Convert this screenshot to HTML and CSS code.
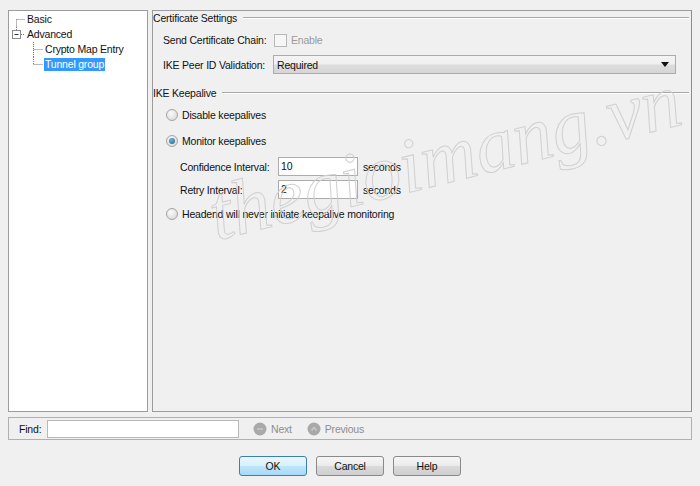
FILE: index.html
```
<!DOCTYPE html>
<html>
<head>
<title>Advanced - Tunnel group</title>
<meta http-equiv="Content-Type" content="text/html; charset=utf-8">
<link rel="stylesheet" href="styles.css">
</head>
<body>
<div class="main">
	<!-- left navigation tree -->
	<div class="tree">
		<div class="node">
			<svg class="conn" width="17" height="15"><path d="M7.5 7.5V15M7.5 7.5H16" class="dots"/></svg>
			<span class="lbl">Basic</span>
		</div>
		<div class="node">
			<svg class="conn" width="17" height="15"><path d="M7.5 0V3" class="dots"/><rect x="3.5" y="3.5" width="8" height="8" fill="#fff" stroke="#8c8c8c"/><path d="M5.5 7.5H9.5" stroke="#333"/><path d="M12 7.5H16" class="dots"/></svg>
			<span class="lbl">Advanced</span>
		</div>
		<div class="node">
			<svg class="conn" width="35" height="15"><path d="M24.5 0V15M24.5 7.5H34" class="dots"/></svg>
			<span class="lbl">Crypto Map Entry</span>
		</div>
		<div class="node">
			<svg class="conn" width="35" height="15"><path d="M24.5 0V7.5M24.5 7.5H34" class="dots"/></svg>
			<span class="lbl sel">Tunnel group</span>
		</div>
	</div>

	<!-- settings panel -->
	<div class="settings">
		<div class="sect"><span>Certificate Settings</span><i class="rule"></i></div>
		<div class="row r-chain">
			<span class="key">Send Certificate Chain:</span>
			<span class="check"></span><span class="off">Enable</span>
		</div>
		<div class="row r-peer">
			<span class="key">IKE Peer ID Validation:</span>
			<div class="combo"><span>Required</span><b class="arrow"></b></div>
		</div>

		<div class="sect s-keep"><span>IKE Keepalive</span><i class="rule"></i></div>
		<div class="row opt r-dis"><span class="radio"></span>Disable keepalives</div>
		<div class="row opt r-mon"><span class="radio on"></span>Monitor keepalives</div>
		<div class="row sub r-conf">
			<span class="key2">Confidence Interval:</span>
			<div class="field">10</div><span class="unit">seconds</span>
		</div>
		<div class="row sub r-retry">
			<span class="key2">Retry Interval:</span>
			<div class="field">2</div><span class="unit">seconds</span>
		</div>
		<div class="row opt r-head"><span class="radio"></span>Headend will never initiate keepalive monitoring</div>

		<div class="mark">thegioimang.vn</div>
	</div>
</div>

<div class="findbar">
	<span class="findlbl">Find:</span>
	<div class="findbox"></div>
	<span class="nav"><svg width="14" height="14"><circle cx="7" cy="7" r="6.5" fill="#a9a9a9"/><path d="M4 7H10" stroke="#c8c8c8" stroke-width="1.5"/></svg>Next</span>
	<span class="nav"><svg width="14" height="14"><circle cx="7" cy="7" r="6.5" fill="#a9a9a9"/><path d="M4.5 8.5L7 5.5L9.5 8.5" stroke="#c8c8c8" stroke-width="1.5" fill="none"/></svg>Previous</span>
</div>

<div class="buttons">
	<div class="btn def">OK</div>
	<div class="btn">Cancel</div>
	<div class="btn">Help</div>
</div>
</body>
</html>
```
FILE: styles.css
```
html, body {
	margin: 0;
	width: 700px;
	height: 486px;
	overflow: hidden;
	background: #f0f0f0;
	font-family: "Liberation Sans", Arial, sans-serif;
	font-size: 10.5px;
	letter-spacing: -0.2px;
	color: #111;
	white-space: nowrap;
}
.main {
	display: flex;
	gap: 4px;
	padding: 10px 8px 0 8px;
	height: 402px;
}
.tree {
	width: 138px;
	background: #fff;
	border: 1px solid #9c9c9c;
	padding-top: 1px;
}
.node {
	display: flex;
	align-items: center;
	height: 15px;
}
.conn {
	flex: none;
}
.dots {
	stroke: #777;
	stroke-dasharray: 1 1;
	fill: none;
}
.lbl {
	padding: 0 1px;
	line-height: 13px;
}
.sel {
	background: #3399ff;
	color: #fff;
}

.settings {
	flex: 1;
	position: relative;
	overflow: hidden;
	border: 1px solid #9c9c9c;
	border-right-color: #8c8c8c;
}
.sect {
	display: flex;
	align-items: center;
	height: 14px;
	padding-right: 2px;
}
.rule {
	flex: 1;
	margin-left: 6px;
	border-top: 1px solid #a8a8a8;
	border-bottom: 1px solid #fff;
}
.row {
	display: flex;
	align-items: center;
}
.r-chain {
	height: 20px;
	margin-top: 5px;
	padding-left: 10px;
}
.r-peer {
	height: 19px;
	margin-top: 5px;
	padding-left: 10px;
}
.key {
	width: 110px;
	flex: none;
}
.check {
	width: 11px;
	height: 11px;
	border: 1px solid #b8b8b8;
	background: #f6f6f6;
	margin: 0 4px 0 1px;
}
.off {
	color: #9a9a9a;
}
.combo {
	width: 398px;
	height: 17px;
	border: 1px solid #acacac;
	background: linear-gradient(#f4f4f4, #f0f0f0 45%, #dddddd 55%, #d6d6d6);
	display: flex;
	align-items: center;
	padding-left: 3px;
}
.combo span {
	flex: 1;
}
.arrow {
	width: 0;
	height: 0;
	border-left: 4px solid transparent;
	border-right: 4px solid transparent;
	border-top: 5px solid #111;
	margin-right: 6px;
}
.s-keep {
	margin-top: 12px;
}
.opt {
	height: 14px;
	padding-left: 13px;
}
.r-dis {
	margin-top: 8px;
}
.r-mon {
	margin-top: 12px;
}
.r-head {
	margin-top: 8px;
}
.radio {
	width: 10px;
	height: 10px;
	border-radius: 50%;
	border: 1px solid #a4a4a4;
	background: radial-gradient(circle at 40% 35%, #fafafa, #d4d4d4);
	margin-right: 4px;
	position: relative;
}
.radio.on::after {
	content: "";
	position: absolute;
	left: 2px;
	top: 2px;
	width: 6px;
	height: 6px;
	border-radius: 50%;
	background: radial-gradient(circle at 40% 35%, #6fb4d8, #1d5e86);
}
.sub {
	height: 19px;
	padding-left: 27px;
}
.r-conf {
	margin-top: 9px;
}
.r-retry {
	margin-top: 4px;
}
.key2 {
	width: 98px;
	flex: none;
}
.field {
	width: 76px;
	height: 17px;
	line-height: 17px;
	border: 1px solid #acacac;
	background: #fff;
	padding-left: 2px;
}
.unit {
	margin-left: 5px;
}
.mark {
	position: absolute;
	left: 68px;
	top: 158px;
	font-family: "Liberation Serif", serif;
	font-style: italic;
	font-size: 78px;
	letter-spacing: 0;
	color: transparent;
	-webkit-text-stroke: 1px #d0d0d0;
	transform: rotate(-14deg);
	transform-origin: left bottom;
	pointer-events: none;
}

.findbar {
	margin: 5px 8px 0 8px;
	height: 21px;
	border: 1px solid #b0b0b0;
	display: flex;
	align-items: center;
	padding-left: 10px;
}
.findlbl {
	width: 28px;
}
.findbox {
	width: 190px;
	height: 16px;
	border: 1px solid #b8b8b8;
	background: #fff;
	margin-right: 14px;
}
.nav {
	display: flex;
	align-items: center;
	gap: 4px;
	color: #8e8e8e;
	margin-right: 15px;
}
.buttons {
	display: flex;
	justify-content: center;
	gap: 9px;
	margin-top: 16px;
}
.btn {
	width: 66px;
	height: 18px;
	line-height: 18px;
	text-align: center;
	border: 1px solid #8a8a8a;
	border-radius: 3px;
	background: linear-gradient(#f6f6f6, #ebebeb 50%, #dadada 52%, #cfcfcf);
}
.btn.def {
	border-color: #3c7fb1;
	background: linear-gradient(#eaf6fd, #d9f0fc 50%, #bee6fd 52%, #a7d9f5);
}
```
